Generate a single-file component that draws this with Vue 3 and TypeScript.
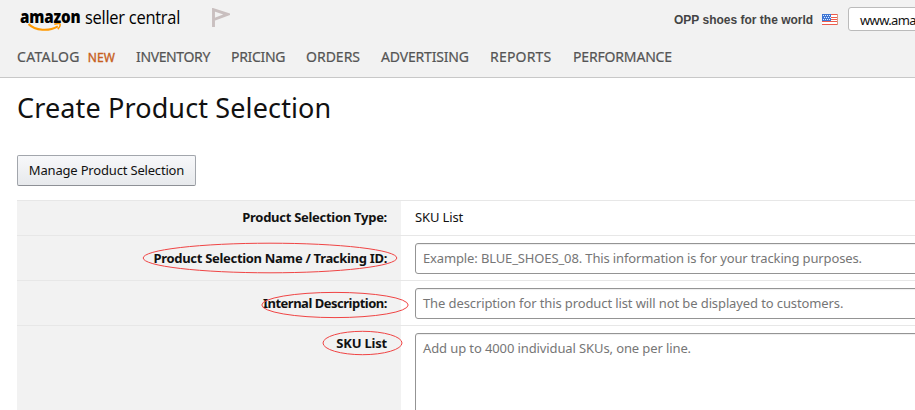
<script setup lang="ts">
interface NavItem {
  label: string
  cls: string
  badge?: string
}

const nav: NavItem[] = [
  { label: 'CATALOG', cls: 'catalog', badge: 'NEW' },
  { label: 'INVENTORY', cls: 'inventory' },
  { label: 'PRICING', cls: 'pricing' },
  { label: 'ORDERS', cls: 'orders' },
  { label: 'ADVERTISING', cls: 'advertising' },
  { label: 'REPORTS', cls: 'reports' },
  { label: 'PERFORMANCE', cls: 'performance' },
]
</script>

<template>
  <div class="page">
    <header class="header">
      <div class="topbar">
        <div class="logo">
          <span class="brand">amazon</span>
          <span class="product">seller central</span>
          <svg class="smile" width="36" height="10" viewBox="0 0 36 10">
            <path d="M.6 1C7 7.8 21 8.6 29.8 3.3" fill="none" stroke="#ff9900" stroke-width="2.1" />
            <path d="M26.3 1.2C29 .5 31.6 .3 32 1C32.4 2 31.4 4.6 29.8 6.1" fill="none" stroke="#ff9900" stroke-width="1.5" />
          </svg>
        </div>
        <svg class="flag" width="18" height="19" viewBox="0 0 18 19">
          <path d="M1.5 19V1.7L15.5 6.3L2 11.5" fill="none" stroke="#c9bfbf" stroke-width="2.9" />
        </svg>
        <div class="account">
          <span class="store">OPP shoes for the world</span>
          <svg class="us" width="16" height="11" viewBox="0 0 16 11">
            <rect width="16" height="11" fill="#fff" />
            <path d="M0 .5H16M0 3.5H16M0 5.5H16M0 7.5H16M0 10.5H16" stroke="#ee5b4c" stroke-width="1" />
            <rect width="9" height="7" fill="#3e76d5" />
            <path d="M1 1.5H9M2 3.5H9M1 5.5H9" stroke="#dcecff" stroke-dasharray="1 1" />
            <path d="M15.5 0V11" stroke="#d99c87" />
          </svg>
          <div class="market">www.ama</div>
        </div>
      </div>
      <nav class="nav">
        <a v-for="item in nav" :key="item.label" :class="item.cls">
          <span>{{ item.label }}</span><span v-if="item.badge" class="new">{{ item.badge }}</span>
        </a>
      </nav>
    </header>
    <main class="main">
      <h1>Create Product Selection</h1>
      <button class="manage" type="button">Manage Product Selection</button>
      <div class="form">
        <div class="row type">
          <div class="label"><span class="l1">Product Selection Type:</span></div>
          <div class="field plain">SKU List</div>
        </div>
        <div class="row">
          <div class="label">
            <span class="l2">Product Selection Name / Tracking ID:</span>
            <svg class="mark m1" width="256" height="32"><ellipse cx="128" cy="16" rx="126.8" ry="14.8" /></svg>
          </div>
          <div class="field"><div class="input"><span class="p1">Example: BLUE_SHOES_08. This information is for your tracking purposes.</span></div></div>
        </div>
        <div class="row">
          <div class="label">
            <span class="l3">Internal Description:</span>
            <svg class="mark m2" width="148" height="28"><ellipse cx="74" cy="14" rx="73.2" ry="12.6" /></svg>
          </div>
          <div class="field"><div class="input"><span class="p2">The description for this product list will not be displayed to customers.</span></div></div>
        </div>
        <div class="row skus">
          <div class="label">
            <span class="l4">SKU List</span>
            <svg class="mark m3" width="81" height="26"><ellipse cx="40.5" cy="13" rx="39.5" ry="11.7" /></svg>
          </div>
          <div class="field"><div class="input area"><span class="p3">Add up to 4000 individual SKUs, one per line.</span></div></div>
        </div>
      </div>
    </main>
  </div>
</template>

<style>
body {
  margin: 0;
  overflow: hidden;
}
</style>

<style scoped>
.page {
  width: 915px;
  height: 410px;
  overflow: hidden;
  background: #fff;
  color: #111;
  font: 13px/20px 'Noto Sans', sans-serif;
  white-space: nowrap;
}
.header {
  height: 77px;
  background: #f2f2f2;
  border-bottom: 1px solid #c8c8c8;
}
.topbar {
  display: flex;
  height: 38px;
}
.logo {
  position: relative;
  display: flex;
  width: 192px;
  padding: 7px 0 0 20px;
  box-sizing: border-box;
  color: #000;
}
.brand {
  flex: none;
  width: 65px;
  font: 800 17px/20px 'Open Sans', sans-serif;
  letter-spacing: -0.2px;
  transform: scaleX(0.89);
  transform-origin: left;
}
.product {
  flex: none;
  font: 18.5px/20px 'Open Sans', sans-serif;
  letter-spacing: -0.3px;
  transform: scaleX(0.89);
  transform-origin: left;
}
.smile {
  position: absolute;
  left: 28px;
  top: 23px;
}
.flag {
  flex: none;
  margin: 8px 0 0 20px;
}
.account {
  display: flex;
  margin-left: auto;
  width: 241px;
}
.store {
  flex: none;
  width: 148px;
  padding-top: 10px;
  font: bold 12px/20px 'Liberation Sans', sans-serif;
  color: #444;
}
.us {
  flex: none;
  margin: 14px 10px 0 0;
}
.market {
  flex: none;
  width: 80px;
  height: 24px;
  margin-top: 7px;
  padding-left: 11px;
  box-sizing: border-box;
  border: 1px solid #bbb;
  border-radius: 3px;
  background: #fff;
  line-height: 25px;
  letter-spacing: -0.65px;
}
.nav {
  display: flex;
  padding: 9px 0 0 17px;
  font-size: 14px;
  color: #555;
  -webkit-text-stroke: 0.2px;
}
.nav a {
  flex: none;
}
.nav .new {
  margin-left: 8px;
  font-size: 12px;
  letter-spacing: 0;
  color: #c7601e;
  -webkit-text-stroke: 0.35px;
}
.catalog { width: 119px; letter-spacing: 0.3px; }
.inventory { width: 95px; letter-spacing: -0.37px; }
.pricing { width: 75px; letter-spacing: -0.3px; }
.orders { width: 75px; }
.advertising { width: 109px; letter-spacing: -0.17px; }
.reports { width: 83px; letter-spacing: 0.2px; }
.performance { letter-spacing: -0.17px; }
.main {
  padding: 12px 0 0 17px;
}
h1 {
  margin: 0;
  height: 65px;
  font-size: 27px;
  line-height: 36px;
  font-weight: 400;
  letter-spacing: 0.13px;
}
.manage {
  display: block;
  width: 179px;
  height: 31px;
  padding: 0;
  border: 1px solid #a2a6ac;
  border-bottom-color: #8d9096;
  border-radius: 2px;
  background: linear-gradient(#f7f8fa, #e7e9ec);
  color: #111;
  font: 13px/29px 'Noto Sans', sans-serif;
  letter-spacing: -0.18px;
}
.form {
  margin-top: 14px;
}
.row {
  display: grid;
  grid-template-columns: 384px 1fr;
  height: 45px;
  box-sizing: border-box;
  border-top: 1px solid #e7e7e7;
}
.type {
  height: 35px;
}
.skus {
  height: 100px;
}
.label {
  position: relative;
  padding: 12px 14px 0 0;
  background: #f2f2f2;
  text-align: right;
  font-weight: 700;
}
.type .label {
  padding-top: 6px;
}
.skus .label {
  padding-top: 7px;
}
.l1 { letter-spacing: -0.28px; }
.l2 { letter-spacing: -0.31px; }
.l3 { letter-spacing: -0.49px; }
.l4 { letter-spacing: -0.2px; }
.p1 { letter-spacing: -0.135px; }
.p2 { letter-spacing: -0.11px; }
.p3 { letter-spacing: -0.11px; }
.field {
  padding: 7px 0 0 14px;
}
.type .plain {
  padding-top: 6px;
  letter-spacing: -0.13px;
}
.input {
  width: 520px;
  height: 31px;
  padding-left: 7px;
  box-sizing: border-box;
  border: 1px solid #949494;
  border-radius: 3px;
  box-shadow: inset 0 1px 1px #eee;
  line-height: 29px;
  color: #767676;
}
.area {
  height: 100px;
}
.mark {
  position: absolute;
  fill: none;
  stroke: #f04444;
  stroke-width: 1;
}
.m1 { left: 125px; top: 6px; }
.m2 { left: 244px; top: 10px; }
.m3 { left: 305px; top: 4px; }
</style>
